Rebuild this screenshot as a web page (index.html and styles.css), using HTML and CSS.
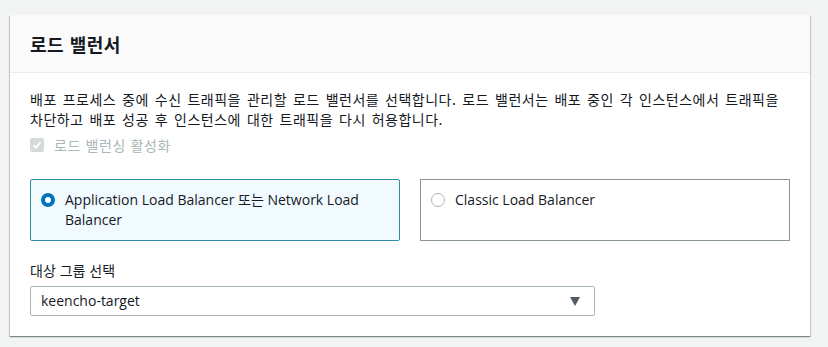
FILE: index.html
```html
<!DOCTYPE html>
<html lang="ko">

<head>
    <meta charset="UTF-8">
    <meta name="viewport" content="width=device-width, initial-scale=1.0">
    <title>로드 밸런서</title>
    <link rel="stylesheet" href="styles.css">
</head>

<body>
    <div class="panel">
        <div class="panel-header">
            <h2>로드 밸런서</h2>
        </div>

        <div class="panel-body">
            <p class="desc">배포 프로세스 중에 수신 트래픽을 관리할 로드 밸런서를 선택합니다. 로드 밸런서는 배포 중인 각 인스턴스에서 트래픽을 차단하고 배포 성공 후 인스턴스에 대한 트래픽을 다시 허용합니다.</p>

            <!-- disabled checkbox -->
            <label class="check-row">
                <span class="check-box">
                    <svg width="10" height="10" viewBox="0 0 10 10">
                        <path d="M1.5 5.2 L4 7.6 L8.6 2.4" fill="none" stroke="#fff" stroke-width="1.8" />
                    </svg>
                </span>
                로드 밸런싱 활성화
            </label>

            <!-- load balancer type tiles -->
            <div class="tiles">
                <div class="tile selected">
                    <span class="radio"></span>
                    <span class="tile-text">Application Load Balancer 또는 Network Load Balancer</span>
                </div>
                <div class="tile">
                    <span class="radio"></span>
                    <span class="tile-text">Classic Load Balancer</span>
                </div>
            </div>

            <div class="field-label">대상 그룹 선택</div>
            <div class="select-box">
                <span>keencho-target</span>
                <span class="arrow"></span>
            </div>
        </div>
    </div>
</body>

</html>
```

FILE: styles.css
```css
body {
    margin: 0;
    padding: 15px 18px 11px 10px;
    background-color: #f2f3f3;
    font-family: "Open Sans", "Noto Sans CJK KR", sans-serif;
    font-size: 14px;
    line-height: 20px;
    color: #16191f;
}

.panel {
    width: 800px;
    background-color: white;
    box-shadow: 0 1px 1px 0 rgba(0, 28, 36, 0.3), 1px 1px 1px 0 rgba(0, 28, 36, 0.15), -1px 1px 1px 0 rgba(0, 28, 36, 0.15);
}

.panel-header {
    height: 57px;
    display: flex;
    align-items: center;
    padding: 0 20px;
    background-color: #fafafa;
    border-bottom: 1px solid #eaeded;
}

.panel-header h2 {
    margin: 0;
    font-size: 18px;
    font-weight: 700;
    letter-spacing: 0.5px;
    font-family: "Noto Sans CJK KR", sans-serif;
}

.panel-body {
    padding: 16px 20px 20px;
}

.desc {
    margin: 0;
    letter-spacing: 0.5px;
    word-spacing: 1.5px;
    word-break: keep-all;
    font-family: "Noto Sans CJK KR", sans-serif;
}

.check-row {
    display: flex;
    align-items: center;
    gap: 10px;
    margin-top: 6px;
    color: #aab7b8;
    letter-spacing: 0.6px;
    font-family: "Noto Sans CJK KR", sans-serif;
}

.check-box {
    width: 14px;
    height: 14px;
    border-radius: 2px;
    background-color: #d5dbdb;
    display: flex;
    align-items: center;
    justify-content: center;
}

.tiles {
    display: flex;
    gap: 20px;
    margin-top: 24px;
}

.tile {
    flex: 1;
    display: flex;
    align-items: flex-start;
    gap: 10px;
    height: 40px;
    padding: 10px;
    border: 1px solid #879596;
}

.tile.selected {
    border-color: #2e8ea8;
    background-color: #f1faff;
    border-radius: 2px;
}

.radio {
    flex: none;
    box-sizing: border-box;
    width: 14px;
    height: 14px;
    margin-top: 3px;
    border-radius: 50%;
    border: 1px solid #aab7b8;
    background-color: white;
}

.tile.selected .radio {
    border: 4px solid #0073bb;
}

.field-label {
    margin-top: 19px;
    font-family: "Noto Sans CJK KR", sans-serif;
}

.select-box {
    box-sizing: border-box;
    width: 565px;
    height: 30px;
    margin-top: 6px;
    padding: 0 14px 0 10px;
    display: flex;
    align-items: center;
    justify-content: space-between;
    border: 1px solid #aab7b8;
    border-radius: 2px;
}

.arrow {
    width: 0;
    height: 0;
    border-left: 5px solid transparent;
    border-right: 5px solid transparent;
    border-top: 9px solid #545b64;
}
```
